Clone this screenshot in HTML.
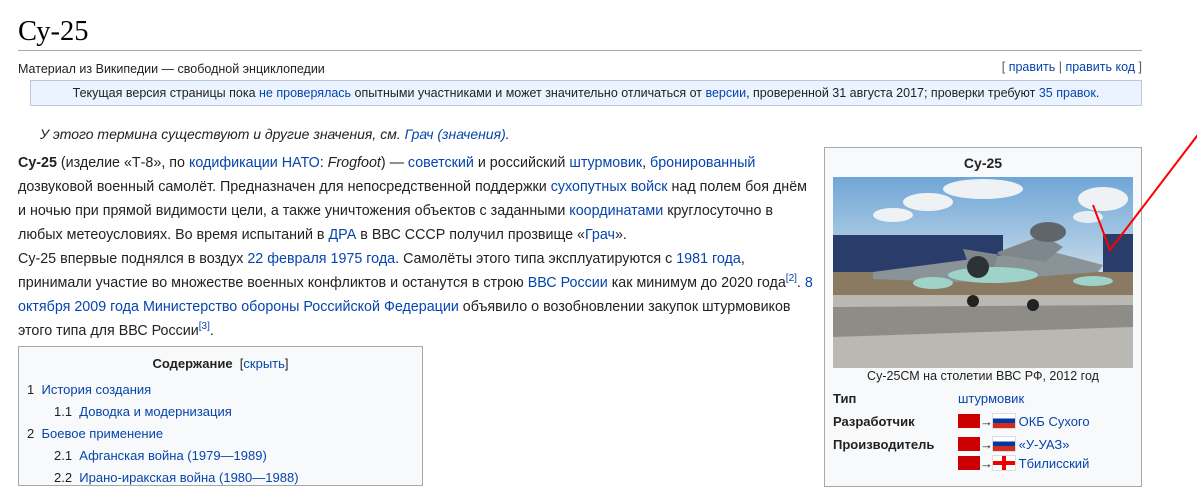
<!DOCTYPE html>
<html><head><meta charset="utf-8"><style>
*{margin:0;padding:0;box-sizing:border-box}
body{width:1197px;height:477px;overflow:hidden;background:#fff;font-family:"Liberation Sans",Arial,sans-serif;color:#222;position:relative}
a{color:#0645ad;text-decoration:none}
.abs{position:absolute}
h1{position:absolute;left:18px;top:14px;font-family:"Liberation Serif",serif;font-weight:normal;font-size:28.5px;color:#000;line-height:36px}
.hr{position:absolute;left:18px;top:50px;width:1124px;height:1px;background:#a2a9b1}
.sub{left:18px;top:61px;font-size:12.5px;line-height:16px}
.edit{right:55px;top:59px;font-size:12.5px;line-height:16px;color:#54595d}
.notice{left:30px;top:80px;width:1112px;height:26px;background:#eaf3ff;border:1px solid #c0c8d8;font-size:12.5px;text-align:center;line-height:24px}
.hat{left:40px;top:125px;font-style:italic;font-size:14px;line-height:18px}
.body{left:18px;top:151px;width:800px;font-size:14.3px;line-height:24px}
sup{font-size:10px;line-height:0}
.info{left:824px;top:147px;width:318px;height:340px;background:#f8f9fa;border:1px solid #a2a9b1}
.toc{left:18px;top:346px;width:405px;height:140px;background:#f8f9fa;border:1px solid #a2a9b1;font-size:13px}
.toc div{position:absolute;white-space:nowrap}
.flag{display:inline-block;width:22px;height:14px;vertical-align:-2px}
.su{background:#c00}
.ru{background:linear-gradient(#fff 0 33%,#0039a6 33% 66%,#d52b1e 66%);outline:1px solid #ddd}
.ge{background:#fff;outline:1px solid #ddd;position:relative}
.ge:before{content:"";position:absolute;left:9px;top:0;width:4px;height:14px;background:#e00}
.ge:after{content:"";position:absolute;left:0;top:5px;width:22px;height:4px;background:#e00}
.row{position:absolute;font-size:13px;line-height:16px;white-space:nowrap}
</style></head><body>
<h1>Су-25</h1>
<div class="hr"></div>
<div class="abs sub">Материал из Википедии — свободной энциклопедии</div>
<div class="abs edit">[ <a>править</a> | <a>править код</a> ]</div>
<div class="abs notice">Текущая версия страницы пока <a>не проверялась</a> опытными участниками и может значительно отличаться от <a>версии</a>, проверенной 31 августа 2017; проверки требуют <a>35 правок</a>.</div>
<div class="abs hat">У этого термина существуют и другие значения, см. <a>Грач (значения)</a>.</div>
<div class="abs body">
<p><b>Су-25</b> (изделие «Т-8», по <a>кодификации НАТО</a>: <i>Frogfoot</i>) — <a>советский</a> и <a style="color:#222">российский</a> <a>штурмовик</a>, <a>бронированный</a> дозвуковой военный самолёт. Предназначен для непосредственной поддержки <a>сухопутных войск</a> над полем боя днём и ночью при прямой видимости цели, а также уничтожения объектов с заданными <a>координатами</a> круглосуточно в любых метеоусловиях. Во время испытаний в <a>ДРА</a> в ВВС СССР получил прозвище «<a>Грач</a>».</p>
<p>Су-25 впервые поднялся в воздух <a>22 февраля 1975 года</a>. Самолёты этого типа эксплуатируются с <a>1981 года</a>, принимали участие во множестве военных конфликтов и останутся в строю <a>ВВС России</a> как минимум до 2020 года<sup><a>[2]</a></sup>. <a>8 октября 2009 года</a> <a>Министерство обороны Российской Федерации</a> объявило о возобновлении закупок штурмовиков этого типа для ВВС России<sup><a>[3]</a></sup>.</p>
</div>
<div class="abs toc">
<div style="left:0;width:403px;text-align:center;top:9px"><b>Содержание</b> &nbsp;[<a>скрыть</a>]</div>
<div style="left:8px;top:35px">1 &nbsp;<a>История создания</a></div>
<div style="left:35px;top:57px">1.1 &nbsp;<a>Доводка и модернизация</a></div>
<div style="left:8px;top:79px">2 &nbsp;<a>Боевое применение</a></div>
<div style="left:35px;top:101px">2.1 &nbsp;<a>Афганская война (1979—1989)</a></div>
<div style="left:35px;top:123px">2.2 &nbsp;<a>Ирано-иракская война (1980—1988)</a></div>
</div>
<div class="abs info">
<div class="abs" style="left:0;width:316px;top:7px;text-align:center;font-weight:bold;font-size:14px">Су-25</div>
<svg class="abs" style="left:8px;top:29px" width="300" height="191" viewBox="0 0 300 191">
<defs><linearGradient id="sk" x1="0" y1="0" x2="0" y2="1"><stop offset="0" stop-color="#6fa6d6"/><stop offset="1" stop-color="#c9dcea"/></linearGradient></defs>
<rect width="300" height="100" fill="url(#sk)"/>
<ellipse cx="150" cy="12" rx="40" ry="10" fill="#eef2f5"/><ellipse cx="95" cy="25" rx="25" ry="9" fill="#eef2f5"/><ellipse cx="60" cy="38" rx="20" ry="7" fill="#eef2f5"/><ellipse cx="270" cy="22" rx="25" ry="12" fill="#eef2f5"/><ellipse cx="255" cy="40" rx="15" ry="6" fill="#e6edf2"/>
<rect y="58" width="170" height="40" fill="#2a3d6a"/><rect x="270" y="57" width="30" height="38" fill="#2a3d6a"/>
<rect y="95" width="300" height="30" fill="#8a7a62"/>
<rect y="118" width="300" height="73" fill="#b9b8b3"/>
<path d="M0 130 L300 128 L300 150 L0 160Z" fill="#8e8c86"/>
<path d="M40 95 L170 78 L200 70 L240 80 L270 88 L265 95 L200 100 L120 105 L40 102Z" fill="#8a9398"/>
<path d="M130 72 L140 100 L160 98 L165 75 L210 58 L230 70 L212 85Z" fill="#7f878c"/>
<ellipse cx="215" cy="55" rx="18" ry="10" fill="#5e666b"/>
<ellipse cx="160" cy="98" rx="45" ry="8" fill="#9fd2c8"/><ellipse cx="100" cy="106" rx="20" ry="6" fill="#9fd2c8"/><ellipse cx="260" cy="104" rx="20" ry="5" fill="#9fd2c8"/>
<circle cx="145" cy="90" r="11" fill="#2c3236"/>
<circle cx="140" cy="124" r="6" fill="#222"/><circle cx="200" cy="128" r="6" fill="#222"/>
</svg>
<div class="abs" style="left:0;width:316px;top:221px;text-align:center;font-size:12.5px">Су-25СМ на столетии ВВС РФ, 2012 год</div>
<div class="row" style="left:8px;top:243px"><b>Тип</b></div>
<div class="row" style="left:133px;top:243px"><a>штурмовик</a></div>
<div class="row" style="left:8px;top:266px"><b>Разработчик</b></div>
<div class="row" style="left:133px;top:266px"><span class="flag su"></span>→<span class="flag ru"></span> <a>ОКБ Сухого</a></div>
<div class="row" style="left:8px;top:289px"><b>Производитель</b></div>
<div class="row" style="left:133px;top:289px"><span class="flag su"></span>→<span class="flag ru"></span> <a>«У-УАЗ»</a></div>
<div class="row" style="left:133px;top:308px"><span class="flag su"></span>→<span class="flag ge"></span> <a>Тбилисский</a></div>
</div>
<svg class="abs" style="left:0;top:0" width="1197" height="477"><path d="M1093 205 L1110 250 L1200 132" fill="none" stroke="#f00" stroke-width="2"/></svg>
</body></html>
